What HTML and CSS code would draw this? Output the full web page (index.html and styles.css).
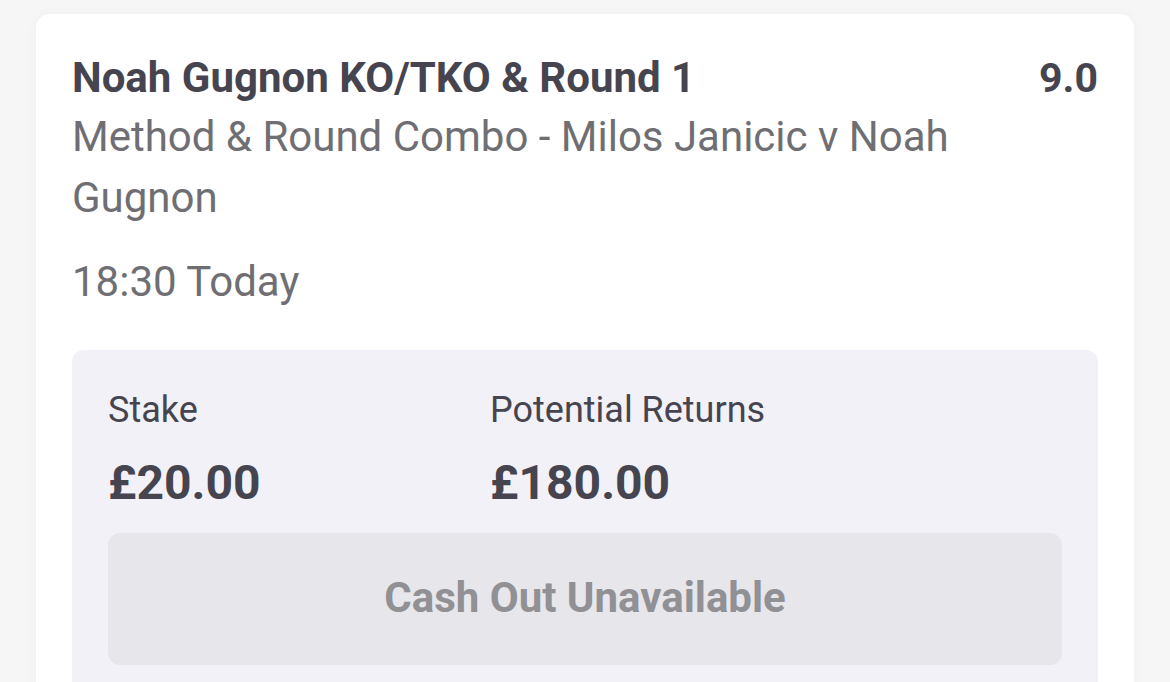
FILE: index.html
```html
<!DOCTYPE html>
<html lang="en">
<head>
  <meta charset="UTF-8">
  <title>Bet Receipt</title>
  <link rel="stylesheet" href="styles.css">
</head>
<body>
  <div class="page">
    <div class="card">
      <!-- selection -->
      <div class="head">
        <div class="title">Noah Gugnon KO/TKO &amp; Round 1</div>
        <div class="odds">9.0</div>
      </div>
      <div class="market">Method &amp; Round Combo - Milos Janicic v Noah Gugnon</div>
      <div class="time">18:30 Today</div>

      <!-- stake panel -->
      <div class="panel">
        <div class="figures">
          <div class="figure">
            <div class="label">Stake</div>
            <div class="amount">£20.00</div>
          </div>
          <div class="figure">
            <div class="label">Potential Returns</div>
            <div class="amount">£180.00</div>
          </div>
        </div>
        <div class="cashout">Cash Out Unavailable</div>
      </div>
    </div>
  </div>
</body>
</html>
```

FILE: styles.css
```css
html, body {
  margin: 0;
  background: #f6f6f7;
  font-family: Roboto, "Liberation Sans", sans-serif;
}

.page {
  padding: 14px 36px 0;
  height: 682px;
  box-sizing: border-box;
  overflow: hidden;
}

.card {
  background: #ffffff;
  border-radius: 14px 14px 0 0;
  padding: 0 36px 40px;
  box-shadow: 0 0 12px rgba(0, 0, 0, 0.03);
}

.head {
  display: flex;
  justify-content: space-between;
  align-items: baseline;
  padding-top: 39px;
}

.title,
.odds {
  font-size: 42px;
  font-weight: 700;
  color: #45444f;
  line-height: 50px;
}

.odds {
  font-size: 41px;
}

.market {
  max-width: 960px;
  margin-top: 3px;
  font-size: 42px;
  line-height: 61px;
  color: #6e6e73;
}

.time {
  margin-top: 29px;
  font-size: 42px;
  line-height: 50px;
  color: #6e6e73;
}

.panel {
  margin-top: 43px;
  background: #f2f1f7;
  border-radius: 12px;
  padding: 39px 36px 40px;
}

.figures {
  display: flex;
}

.figure {
  width: 382px;
}

.label {
  font-size: 36px;
  line-height: 42px;
  color: #45444f;
}

.amount {
  margin-top: 24px;
  font-size: 48px;
  font-weight: 700;
  line-height: 56px;
  color: #45444f;
}

.cashout {
  margin-top: 22px;
  height: 132px;
  box-sizing: border-box;
  padding-bottom: 4px;
  display: flex;
  align-items: center;
  justify-content: center;
  background: #e6e6eb;
  border-radius: 12px;
  font-size: 42px;
  font-weight: 700;
  color: #909095;
}
```
